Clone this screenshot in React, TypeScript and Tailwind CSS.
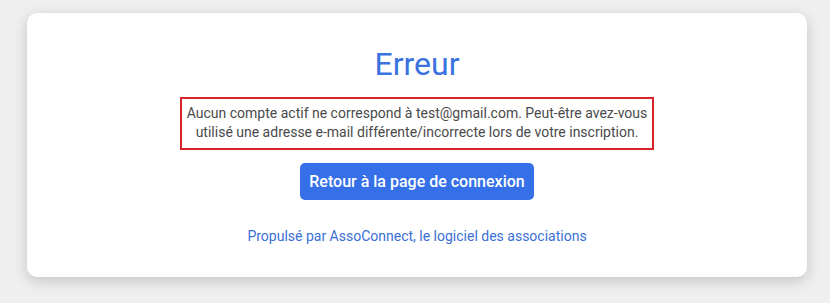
import React from "react";

const App = () => {
  return (
    <div className="min-h-[303px] w-[830px] bg-[#efefef] pt-[13px] font-['Roboto',sans-serif]">
      <div className="ml-[27px] flex h-[264px] w-[780px] flex-col items-center rounded-[10px] bg-white pt-[32px] shadow-[0_4px_14px_rgba(0,0,0,0.18)]">
        <h1 className="text-[32px] leading-[38px] font-normal text-[#3a72df]">Erreur</h1>
        <div className="mt-[14px] border-2 border-[#d7242b] px-[5px] pt-[5px] pb-[6px] text-center text-[14px] leading-[19px] text-[#4a4a4a]">
          Aucun compte actif ne correspond à test@gmail.com. Peut-être avez-vous
          <br />
          utilisé une adresse e-mail différente/incorrecte lors de votre inscription.
        </div>
        <button className="mt-[13px] h-[37px] rounded-[5px] bg-[#3670e8] px-[9px] text-[16px] font-medium text-white">
          Retour à la page de connexion
        </button>
        <a className="mt-[27px] text-[14px] leading-[19px] text-[#3a6fd6]" href="#">
          Propulsé par AssoConnect, le logiciel des associations
        </a>
      </div>
    </div>
  );
};

export default App;
